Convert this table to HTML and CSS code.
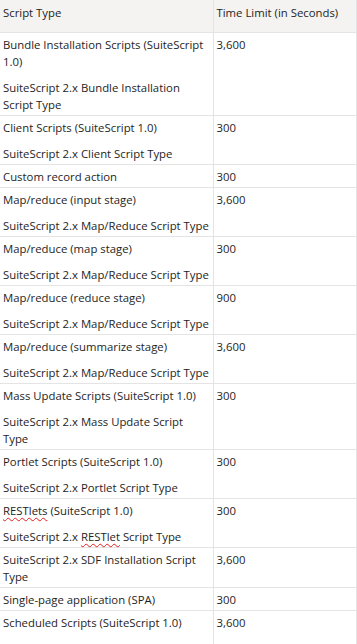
FILE: index.html
```html
<!DOCTYPE html>
<html>
<head>
<meta charset="utf-8">
<link rel="stylesheet" href="styles.css">
</head>
<body>
<table class="limits">
  <thead>
    <tr><th class="c1">Script Type</th><th class="c2">Time Limit (in Seconds)</th></tr>
  </thead>
  <tbody>
    <tr><td><p>Bundle Installation Scripts (SuiteScript 1.0)</p><p>SuiteScript 2.x Bundle Installation Script Type</p></td><td><p>3,600</p></td></tr>
    <tr><td><p>Client Scripts (SuiteScript 1.0)</p><p>SuiteScript 2.x Client Script Type</p></td><td><p>300</p></td></tr>
    <tr><td><p>Custom record action</p></td><td><p>300</p></td></tr>
    <tr><td><p>Map/reduce (input stage)</p><p>SuiteScript 2.x Map/Reduce Script Type</p></td><td><p>3,600</p></td></tr>
    <tr><td><p>Map/reduce (map stage)</p><p>SuiteScript 2.x Map/Reduce Script Type</p></td><td><p>300</p></td></tr>
    <tr><td><p>Map/reduce (reduce stage)</p><p>SuiteScript 2.x Map/Reduce Script Type</p></td><td><p>900</p></td></tr>
    <tr><td><p>Map/reduce (summarize stage)</p><p>SuiteScript 2.x Map/Reduce Script Type</p></td><td><p>3,600</p></td></tr>
    <tr><td><p>Mass Update Scripts (SuiteScript 1.0)</p><p>SuiteScript 2.x Mass Update Script Type</p></td><td><p>300</p></td></tr>
    <tr><td><p>Portlet Scripts (SuiteScript 1.0)</p><p>SuiteScript 2.x Portlet Script Type</p></td><td><p>300</p></td></tr>
    <tr><td><p><span class="spell">RESTlets</span> (SuiteScript 1.0)</p><p>SuiteScript 2.x <span class="spell">RESTlet</span> Script Type</p></td><td><p>300</p></td></tr>
    <tr><td><p>SuiteScript 2.x SDF Installation Script Type</p></td><td><p>3,600</p></td></tr>
    <tr><td><p>Single-page application (SPA)</p></td><td><p>300</p></td></tr>
    <tr><td><p>Scheduled Scripts (SuiteScript 1.0)</p><p>&nbsp;</p></td><td><p>3,600</p></td></tr>
  </tbody>
</table>
</body>
</html>
```
FILE: styles.css
```css
html, body {
  margin: 0;
  padding: 0;
  background: #ffffff;
}
body {
  font-family: "Segoe UI", "Open Sans", "Noto Sans", sans-serif;
  font-size: 11.35px;
  color: #1e1e1e;
  overflow: hidden;
}
.limits {
  border-collapse: collapse;
  width: 357px;
  table-layout: fixed;
}
.limits th, .limits td {
  border: 1px solid #e4e4e4;
  border-left: none;
  vertical-align: top;
  text-align: left;
  font-weight: normal;
  line-height: 17px;
  padding: 3px 2px 2px 3px;
}
.limits th:last-child, .limits td:last-child {
  border-right: 1px solid #e4e4e4;
}
.limits thead th {
  background: #f4f3f1;
  border-top: none;
  padding: 4px 2px 11px 3px;
}
.c1 { width: 213px; box-sizing: border-box; }
.limits p {
  margin: 0;
}
.limits p + p {
  margin-top: 9px;
}
.spell {
  text-decoration: underline wavy #e0201c;
  text-decoration-thickness: 1px;
  text-underline-offset: 2px;
}
```
